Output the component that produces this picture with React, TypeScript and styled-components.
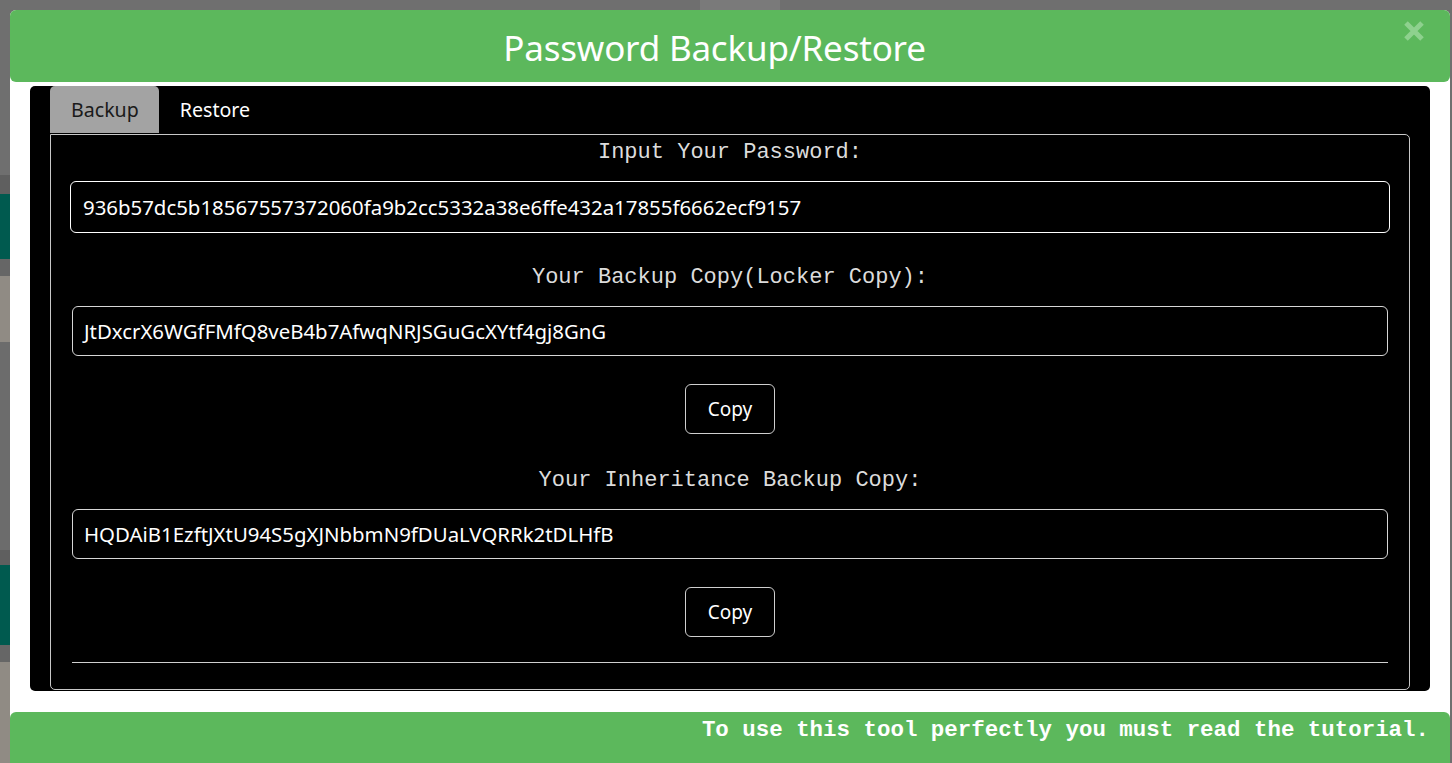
import React from "react"
import styled, { createGlobalStyle } from "styled-components"

const GlobalStyle = createGlobalStyle`
  html, body {
    margin: 0;
    padding: 0;
    height: 100%;
    overflow: hidden;
  }
  body {
    font-family: "Noto Sans", "DejaVu Sans", sans-serif;
  }
`

const green = "#5cb85c"

// dimmed page behind the modal
const Backdrop = styled.div`
  position: relative;
  width: 1452px;
  height: 763px;
  background: #6f6f6f;
  overflow: hidden;
`

const PageEdge = styled.div`
  width: 10px;
  display: flex;
  flex-direction: column;
`

const EdgeBlock = styled.div<{ $h: number; $color: string }>`
  height: ${(p) => p.$h}px;
  background: ${(p) => p.$color};
`

const TopButton = styled.div`
  position: absolute;
  top: 0;
  left: 700px;
  width: 80px;
  height: 10px;
  background: #7a7a7a;
`

const Modal = styled.div`
  position: absolute;
  top: 10px;
  left: 10px;
  right: 2px;
  bottom: -10px;
  background: #fff;
  border-radius: 6px;
  display: flex;
  flex-direction: column;
`

const Header = styled.div`
  position: relative;
  height: 72px;
  background: ${green};
  border-radius: 6px;
  display: flex;
  align-items: center;
  justify-content: center;
`

const Title = styled.h1`
  margin: 0;
  color: #fff;
  font-family: "Noto Sans", sans-serif;
  font-weight: 400;
  font-size: 35px;
  letter-spacing: -0.2px;
  padding: 2px 31px 0 0;
`

const Close = styled.button`
  position: absolute;
  top: 10px;
  right: 25px;
  width: 22px;
  height: 22px;
  padding: 0;
  border: 0;
  background: none;
  cursor: pointer;
  display: flex;
`

const Panel = styled.div`
  margin: 4px 20px 0 20px;
  height: 604px;
  background: #000;
  border-radius: 5px;
  padding: 0 20px 1px 20px;
  display: flex;
  flex-direction: column;
`

const Tabs = styled.div`
  display: flex;
  height: 48px;
`

const Tab = styled.div<{ $active?: boolean }>`
  display: flex;
  align-items: center;
  padding: 0 20px 0 21px;
  border-radius: 5px 5px 0 0;
  font-size: 19.6px;
  color: ${(p) => (p.$active ? "#1a1a1a" : "#fff")};
  background: ${(p) => (p.$active ? "#a3a3a3" : "transparent")};
  margin-bottom: 1px;
`

const TabBody = styled.div`
  flex: 1;
  border: 1px solid #c8c8c8;
  border-radius: 0 5px 5px 5px;
  padding: 0 20px;
  display: flex;
  flex-direction: column;
  align-items: stretch;
`

const Label = styled.div<{ $gap: number }>`
  margin-top: ${(p) => p.$gap}px;
  height: 30px;
  line-height: 34px;
  text-align: center;
  font-family: "Liberation Mono", "Courier New", monospace;
  font-size: 22px;
  color: #dcdcdc;
`

const Field = styled.div<{ $focused?: boolean }>`
  margin-top: 15px;
  height: ${(p) => (p.$focused ? 52 : 50)}px;
  margin-left: ${(p) => (p.$focused ? -1 : 1)}px;
  margin-right: ${(p) => (p.$focused ? -1 : 1)}px;
  box-sizing: border-box;
  border: ${(p) => (p.$focused ? "1.5px solid #fff" : "1px solid #d6d6d6")};
  border-radius: 6px;
  display: flex;
  align-items: center;
  padding: 0 ${(p) => (p.$focused ? 12 : 11)}px;
  font-size: 20.4px;
  color: #fff;
  white-space: nowrap;
  overflow: hidden;
`

const CopyButton = styled.button`
  margin: 28px auto 0 auto;
  width: 90px;
  height: 50px;
  background: #000;
  border: 1px solid #cfcfcf;
  border-radius: 6px;
  color: #fff;
  font-family: "Noto Sans", sans-serif;
  font-size: 19px;
  cursor: pointer;
`

const Rule = styled.hr`
  margin: 25px 1px 0 1px;
  border: 0;
  border-top: 1px solid #d0d0d0;
`

const Footer = styled.div`
  margin-top: 21px;
  flex: 1;
  background: ${green};
  border-radius: 6px 6px 0 0;
  display: flex;
  justify-content: flex-end;
  padding: 5px 21px 0 0;
  font-family: "Liberation Mono", "Courier New", monospace;
  font-weight: 700;
  font-size: 22.45px;
  color: #fff;
`

const CloseIcon = () => (
  <svg width="22" height="22" viewBox="0 0 22 22">
    <path
      d="M3 3 L19 19 M19 3 L3 19"
      stroke="#8ed18e"
      strokeWidth="5"
      strokeLinecap="butt"
    />
  </svg>
)

const edge: [number, string][] = [
  [175, "#6f6f6f"],
  [19, "#5f5f5f"],
  [65, "#005a4f"],
  [17, "#666666"],
  [66, "#908b84"],
  [208, "#6c6c6c"],
  [15, "#5f5f5f"],
  [80, "#005a4f"],
  [17, "#666666"],
  [101, "#908b84"],
]

const sections = [
  { label: "Your Backup Copy(Locker Copy):", value: "JtDxcrX6WGfFMfQ8veB4b7AfwqNRJSGuGcXYtf4gj8GnG" },
  { label: "Your Inheritance Backup Copy:", value: "HQDAiB1EzftJXtU94S5gXJNbbmN9fDUaLVQRRk2tDLHfB" },
]

export default function App() {
  return (
    <>
      <GlobalStyle />
      <Backdrop>
        <PageEdge>
          {edge.map(([h, c], i) => (
            <EdgeBlock key={i} $h={h} $color={c} />
          ))}
        </PageEdge>
        <TopButton />

        <Modal>
          <Header>
            <Title>Password Backup/Restore</Title>
            <Close aria-label="close">
              <CloseIcon />
            </Close>
          </Header>

          <Panel>
            <Tabs>
              <Tab $active>Backup</Tab>
              <Tab>Restore</Tab>
            </Tabs>
            <TabBody>
              <Label $gap={1}>Input Your Password:</Label>
              <Field $focused>936b57dc5b18567557372060fa9b2cc5332a38e6ffe432a17855f6662ecf9157</Field>

              {sections.map((s, i) => (
                <React.Fragment key={s.label}>
                  <Label $gap={i === 0 ? 28 : 30}>{s.label}</Label>
                  <Field>{s.value}</Field>
                  <CopyButton>Copy</CopyButton>
                </React.Fragment>
              ))}

              <Rule />
            </TabBody>
          </Panel>

          <Footer>To use this tool perfectly you must read the tutorial.</Footer>
        </Modal>
      </Backdrop>
    </>
  )
}
